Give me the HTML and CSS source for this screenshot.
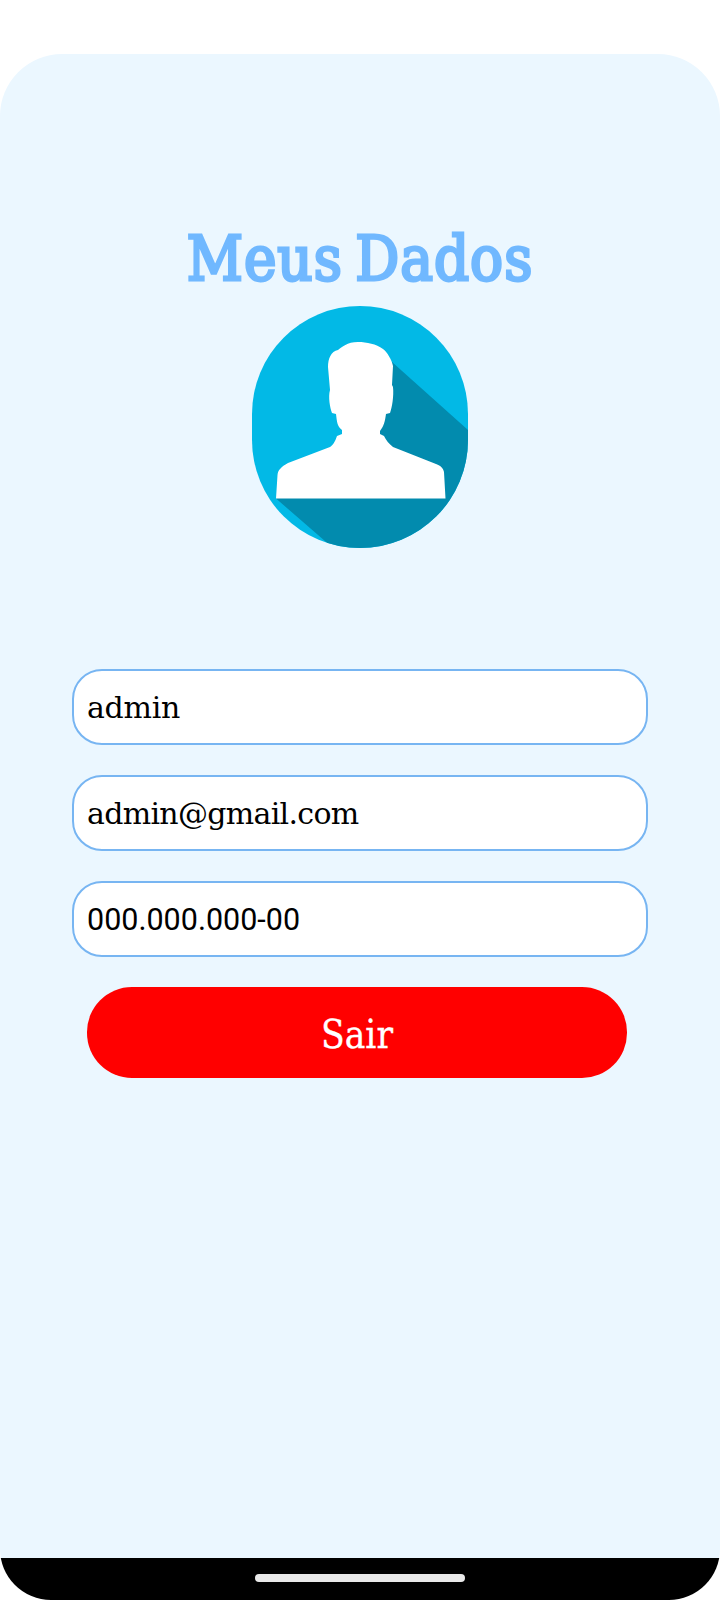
FILE: index.html
```html
<!DOCTYPE html>
<html lang="pt-BR">
<head>
<meta charset="utf-8">
<title>Meus Dados</title>
<link rel="stylesheet" href="styles.css">
</head>
<body>
<div class="phone">
  <main class="panel">
    <h1 class="title">Meus Dados</h1>
    <svg class="avatar" viewBox="12 11 216 242" aria-hidden="true">
      <rect x="12" y="11" width="216" height="242" fill="#02b9e6"/>
      <path fill="#028bae" d="M152 67 228 135V253H93L36 203.500 120 160Z"/>
      <path fill="#fff" d="M118 47C107 47 102 52 98 55C91 56 88 64 88 72L90 95C88 102 90 113 92 118L96 119C97 127 97 131 102 135V139L97 141C95 147 93 150 90 152L48 168C41 172 38 175 37.500 180L36 203.500H205.500L204 177C203 173 201 171 196 169L153 152C149 149 146 145 144 141L140 139V136C144 131 145 126 146 119L150 118C152 113 154 101 153 92L152 90 153 71C152 65 147 57 143 54C136 49 127 47 118 47Z"/>
    </svg>
    <form class="form">
      <input class="field" type="text" value="admin" aria-label="Nome">
      <input class="field field-email" type="text" value="admin@gmail.com" aria-label="E-mail">
      <input class="field field-cpf" type="text" value="000.000.000-00" aria-label="CPF">
      <button class="logout" type="button">Sair</button>
    </form>
  </main>
  <nav class="navbar"><span class="handle"></span></nav>
</div>
</body>
</html>
```
FILE: styles.css
```css
* { box-sizing: border-box; }
body {
  margin: 0;
  background: #fff;
  font-family: "Roboto Slab", "DejaVu Serif", serif;
}
.phone {
  height: 1600px;
  padding-top: 54px;
  display: flex;
  flex-direction: column;
  overflow: hidden;
  border-radius: 0 0 51px 51px;
}
.panel {
  flex: 1;
  display: flex;
  flex-direction: column;
  align-items: center;
  padding-top: 165px;
  background: #ebf7ff;
  border-radius: 62px 62px 0 0;
}
.title {
  margin: 0;
  height: 87px;
  line-height: 80px;
  font-family: "Roboto Slab", "DejaVu Serif Condensed", "DejaVu Serif", serif;
  font-size: 61px;
  font-weight: 500;
  letter-spacing: 1px;
  word-spacing: -6px;
  white-space: nowrap;
  color: #70b8ff;
  -webkit-text-stroke: 2.8px #70b8ff;
}
.avatar {
  width: 216px;
  height: 242px;
  border-radius: 108px;
}
.form {
  width: 576px;
  margin-top: 121px;
  display: flex;
  flex-direction: column;
  gap: 30px;
}
.field {
  width: 100%;
  height: 76px;
  padding: 0 14px 0 13px;
  border: 2px solid #77b5f2;
  border-radius: 30px;
  background: #fff;
  color: #000;
  font-family: inherit;
  font-size: 30px;
  letter-spacing: -0.3px;
}
.field-email { letter-spacing: -0.7px; }
.field-cpf {
  font-family: Roboto, sans-serif;
  font-size: 30.5px;
  letter-spacing: 0;
}
.logout {
  width: 540px;
  height: 91px;
  margin-left: 15px;
  padding: 3px 0 0;
  border: 0;
  border-radius: 45px;
  background: #f00;
  color: #fff;
  font-family: "Roboto Slab", "DejaVu Serif Condensed", "DejaVu Serif", serif;
  font-size: 38.5px;
  -webkit-text-stroke: 0.3px #fff;
}
.navbar {
  height: 42px;
  display: flex;
  justify-content: center;
  padding-top: 16px;
  background: #000;
}
.handle {
  width: 210px;
  height: 8px;
  border-radius: 4px;
  background: #e9e9e9;
}
```
